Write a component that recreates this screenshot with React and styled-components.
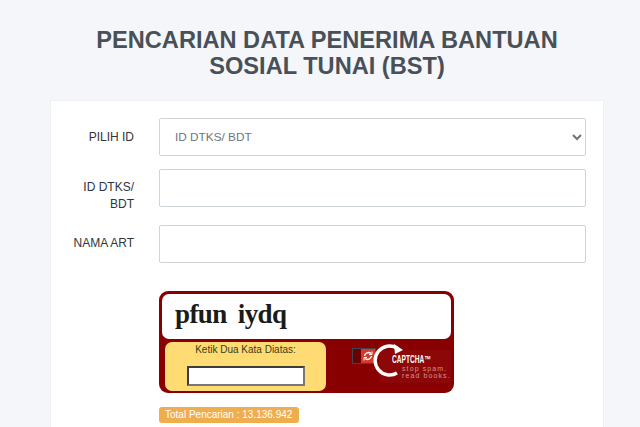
import React from 'react'
import styled, { createGlobalStyle } from 'styled-components'

const GlobalStyle = createGlobalStyle`
  html, body {
    margin: 0;
    height: 427px;
    overflow: hidden;
    background: #f4f6fa;
    font-family: "Liberation Sans", Arial, sans-serif;
  }
`

const Page = styled.div`
  width: 554px;
  margin-left: 50px;
  padding-top: 27px;
`

const Title = styled.h1`
  margin: 0 0 21px;
  font-size: 23.6px;
  line-height: 26px;
  font-weight: 700;
  text-align: center;
  color: #495057;
`

const Card = styled.div`
  background: #fff;
  border: 1px solid #eef0f4;
  border-bottom: 0;
  padding: 17px 17px 0 0;
  height: 330px;
`

const Row = styled.div`
  display: grid;
  grid-template-columns: 83px 427px;
  column-gap: 25px;
  margin-bottom: ${p => p.$gap || 13}px;
`

const Label = styled.label`
  font-size: 12px;
  line-height: 17px;
  color: #2f353b;
  text-align: right;
  padding-left: 20px;
  padding-top: ${p => p.$top || 10}px;
`

const Select = styled.select`
  width: 427px;
  height: 38px;
  box-sizing: border-box;
  border: 1px solid #ced4da;
  border-radius: 2px;
  background: #fff;
  color: #6c757d;
  font-family: inherit;
  font-size: 11.8px;
  padding: 0 11px;
  outline: 0;
`

const Input = styled.input`
  width: 427px;
  height: 38px;
  box-sizing: border-box;
  border: 1px solid #ced4da;
  border-radius: 2px;
  background: #fff;
  outline: 0;
`

const CaptchaColumn = styled.div`
  grid-column: 2;
`

const Captcha = styled.div`
  position: relative;
  box-sizing: border-box;
  width: 295px;
  height: 102px;
  background: #880000;
  border-radius: 9px;
  padding: 3px;
`

const Challenge = styled.div`
  box-sizing: border-box;
  height: 45px;
  width: 289px;
  background: #fff;
  border-radius: 7px;
  padding: 5px 0 0 13px;
  font-family: "Liberation Serif", serif;
  font-weight: 700;
  font-size: 27px;
  line-height: 30px;
  letter-spacing: -0.6px;
  word-spacing: 5px;
  color: #1b1b1b;
`

const AnswerBox = styled.div`
  box-sizing: border-box;
  width: 161px;
  height: 49px;
  margin: 3px 0 0 3px;
  background: #ffdc73;
  border-radius: 7px;
  display: flex;
  flex-direction: column;
  align-items: center;
  padding-top: 2px;
  font-size: 10px;
  line-height: 12px;
  color: #3a3a1a;
`

const AnswerInput = styled.input`
  box-sizing: border-box;
  width: 118px;
  height: 20px;
  margin-top: 10px;
  background: #fff;
  border: 2px solid;
  border-color: #3c3c3c #777 #777 #3c3c3c;
  outline: 0;
`

const Brand = styled.div`
  position: absolute;
  left: 192px;
  top: 53px;
  width: 100px;
  height: 44px;
`

const BrandLogo = styled.svg`
  position: absolute;
  left: 0;
  top: 0;
  overflow: visible;
`

const BrandName = styled.span`
  position: absolute;
  left: 41px;
  top: 11px;
  font-size: 10px;
  line-height: 10px;
  font-weight: 700;
  color: #fff;
  white-space: nowrap;
  transform: scaleX(0.66);
  transform-origin: left center;
`

const BrandSlogan = styled.span`
  position: absolute;
  left: 51px;
  top: ${p => p.$top}px;
  font-size: 7px;
  line-height: 7px;
  letter-spacing: 1.1px;
  color: #d09494;
  white-space: nowrap;
`

const Total = styled.div`
  display: inline-block;
  margin-top: 14px;
  background: #f0ad4e;
  border-radius: 3px;
  padding: 2px 7px 2px 6px;
  font-size: 10px;
  line-height: 12px;
  color: #fff;
`

const BrandMark = () => (
  <BrandLogo width="100" height="44" viewBox="0 0 100 44">
    <rect x="28" y="6" width="72" height="33" fill="#8f0f0f" opacity="0.5" />
    <rect x="1.5" y="4.5" width="23" height="15" fill="#6a0000" stroke="#3f4650" />
    <rect x="10" y="5" width="14" height="14" fill="#d43a2c" />
    <path d="M13.500 12a4 4 0 0 1 6.500-2.500M20.500 12a4 4 0 0 1-6.500 2.500" fill="none" stroke="#fff" strokeWidth="1.4" />
    <path d="M21 7.500v3h-3M13 16.500v-3h3" fill="none" stroke="#fff" strokeWidth="1" />
    <path d="M46 4A14.500 14.500 0 1 0 46 29" fill="none" stroke="#fff" strokeWidth="3.4" />
    <path d="M43 0l9 6-8 4z" fill="#fff" />
  </BrandLogo>
)

const App = () => {
  return (
    <>
      <GlobalStyle />
      <Page>
        <Title>
          PENCARIAN DATA PENERIMA BANTUAN
          <br />
          SOSIAL TUNAI (BST)
        </Title>
        <Card>
          <Row>
            <Label $top={11}>PILIH ID</Label>
            <Select defaultValue="dtks">
              <option value="dtks">ID DTKS/ BDT</option>
            </Select>
          </Row>
          <Row $gap={12}>
            <Label>ID DTKS/ BDT</Label>
            <Input />
          </Row>
          <Row $gap={28}>
            <Label>NAMA ART</Label>
            <Input />
          </Row>
          <Row>
            <CaptchaColumn>
              <Captcha>
                <Challenge>pfun iydq</Challenge>
                <AnswerBox>
                  Ketik Dua Kata Diatas:
                  <AnswerInput />
                </AnswerBox>
                <Brand>
                  <BrandMark />
                  <BrandName>CAPTCHA™</BrandName>
                  <BrandSlogan $top={21}>stop spam.</BrandSlogan>
                  <BrandSlogan $top={28}>read books.</BrandSlogan>
                </Brand>
              </Captcha>
              <Total>Total Pencarian : 13.136.942</Total>
            </CaptchaColumn>
          </Row>
        </Card>
      </Page>
    </>
  )
}

export default App
